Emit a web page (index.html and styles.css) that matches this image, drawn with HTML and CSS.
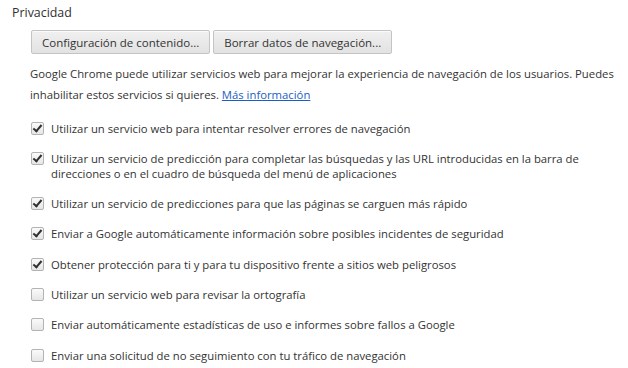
FILE: index.html
```html
<!DOCTYPE html>
<html lang="es">
<head>
    <meta charset="UTF-8">
    <title>Privacidad</title>
    <link rel="stylesheet" href="styles.css">
</head>
<body>
    <section class="settings-section">
        <h3>Privacidad</h3>
        <div class="section-body">
            <div class="button-row">
                <button class="btn">Configuración de contenido...</button>
                <button class="btn">Borrar datos de navegación...</button>
            </div>
            <p class="desc">
                Google Chrome puede utilizar servicios web para mejorar la experiencia de navegación de los usuarios. Puedes<br>
                inhabilitar estos servicios si quieres. <a href="#">Más información</a>
            </p>
            <div class="option">
                <span class="check checked"></span>
                <span class="label">Utilizar un servicio web para intentar resolver errores de navegación</span>
            </div>
            <div class="option">
                <span class="check checked"></span>
                <span class="label">Utilizar un servicio de predicción para completar las búsquedas y las URL introducidas en la barra de<br>direcciones o en el cuadro de búsqueda del menú de aplicaciones</span>
            </div>
            <div class="option">
                <span class="check checked"></span>
                <span class="label">Utilizar un servicio de predicciones para que las páginas se carguen más rápido</span>
            </div>
            <div class="option">
                <span class="check checked"></span>
                <span class="label">Enviar a Google automáticamente información sobre posibles incidentes de seguridad</span>
            </div>
            <div class="option">
                <span class="check checked"></span>
                <span class="label">Obtener protección para ti y para tu dispositivo frente a sitios web peligrosos</span>
            </div>
            <div class="option">
                <span class="check"></span>
                <span class="label">Utilizar un servicio web para revisar la ortografía</span>
            </div>
            <div class="option">
                <span class="check"></span>
                <span class="label">Enviar automáticamente estadísticas de uso e informes sobre fallos a Google</span>
            </div>
            <div class="option">
                <span class="check"></span>
                <span class="label">Enviar una solicitud de no seguimiento con tu tráfico de navegación</span>
            </div>
        </div>
    </section>
</body>
</html>
```

FILE: styles.css
```css
body {
    margin: 0;
    padding: 5px 0 0 12px;
    background: #ffffff;
    color: #333333;
    font-family: "Open Sans", "Noto Sans", sans-serif;
    font-size: 11.3px;
}
h3 {
    margin: 0;
    font-size: 12.4px;
    font-weight: normal;
    color: #303030;
    line-height: 16px;
}
.section-body {
    padding-left: 19px;
    padding-top: 9px;
}
.button-row {
    display: flex;
    gap: 3px;
}
.btn {
    font-family: inherit;
    font-size: 11.5px;
    color: #333333;
    height: 24px;
    padding: 0 10px;
    border: 1px solid #c4c4c4;
    border-radius: 2px;
    background: linear-gradient(#f0f0f0, #e2e2e2);
    box-shadow: inset 0 1px 0 #fafafa;
}
.desc {
    margin: 9px 0 0 -1px;
    line-height: 21px;
    white-space: nowrap;
}
.desc a {
    color: #1a5ec4;
}
.option {
    display: flex;
    align-items: flex-start;
    margin-top: 15.5px;
    line-height: 15px;
}
.option + .option {
    margin-top: 15.3px;
}
.check {
    flex: none;
    width: 11px;
    height: 11px;
    margin-top: 1px;
    margin-right: 7px;
    border: 1px solid #b3b3b3;
    border-radius: 2px;
    background: linear-gradient(#fafafa, #e6e6e6);
    position: relative;
}
.check.checked::after {
    content: "";
    position: absolute;
    left: 3px;
    top: 0px;
    width: 3px;
    height: 7px;
    border: solid #303030;
    border-width: 0 2px 2px 0;
    transform: rotate(40deg);
}
.label {
    white-space: nowrap;
}
```
